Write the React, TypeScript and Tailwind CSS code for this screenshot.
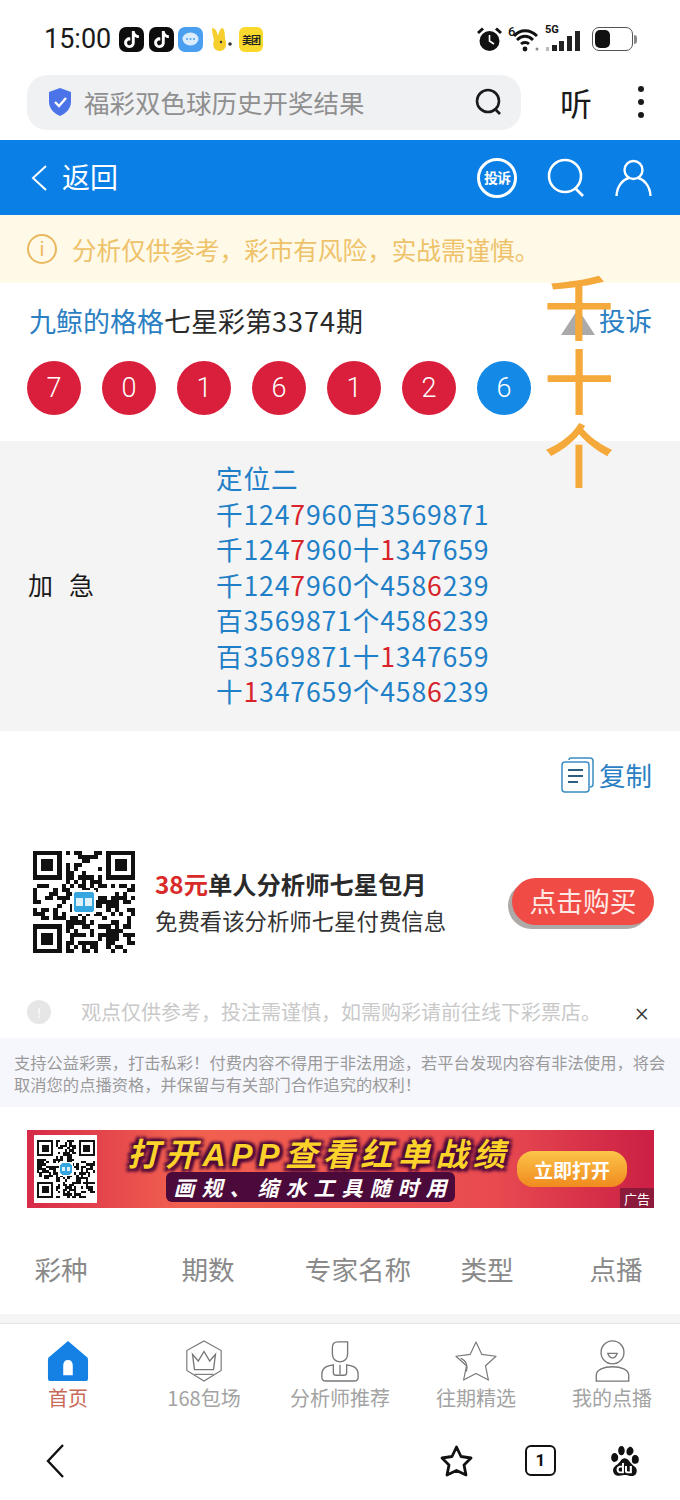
import React from "react";
import { SiTiktok, SiBaidu } from "react-icons/si";

const FONT = "font-['Noto_Sans_CJK_SC','Noto_Sans',sans-serif]";

function QR({ size, seed, logo = true }: { size: number; seed: number; logo?: boolean }) {
  const n = 25;
  let s = seed;
  const cells: React.ReactNode[] = [];
  const next = () => {
    s = (s * 1103515245 + 12345) & 0x7fffffff;
    return (s >> 16) & 1;
  };
  const inFinder = (x: number, y: number) =>
    (x < 8 && y < 8) || (x > 16 && y < 8) || (x < 8 && y > 16);
  for (let y = 0; y < n; y++) {
    for (let x = 0; x < n; x++) {
      if (inFinder(x, y)) continue;
      if (next()) cells.push(<rect key={`${x}-${y}`} x={x} y={y} width="1.02" height="1.02" fill="#111" />);
    }
  }
  const finder = (x: number, y: number) => (
    <g key={`f${x}${y}`}>
      <rect x={x} y={y} width="7" height="7" fill="#111" />
      <rect x={x + 1} y={y + 1} width="5" height="5" fill="#fff" />
      <rect x={x + 2} y={y + 2} width="3" height="3" fill="#111" />
    </g>
  );
  return (
    <svg width={size} height={size} viewBox="0 0 25 25" shapeRendering="crispEdges">
      {cells}
      {finder(0, 0)}
      {finder(18, 0)}
      {finder(0, 18)}
      {logo && (
        <g>
          <rect x="9.5" y="9.5" width="6" height="6" fill="#fff" />
          <rect x="10" y="10" width="5" height="5" rx="1" fill="#35a6e0" />
          <rect x="10.6" y="11.6" width="1.6" height="1.8" fill="#dff2fb" />
          <rect x="12.8" y="11.6" width="1.6" height="1.8" fill="#dff2fb" />
        </g>
      )}
    </svg>
  );
}

function Ball({ n, blue }: { n: number; blue?: boolean }) {
  return (
    <div className={`flex h-[54px] w-[54px] items-center justify-center rounded-full text-[27px] text-white font-['Roboto',sans-serif] font-light ${blue ? "bg-[#148ae6]" : "bg-[#d91f3b]"}`}>
      {n}
    </div>
  );
}

function StatusLeft() {
  return (
    <div className="flex items-center">
      <span className="w-[75px] pl-0 text-[27px] leading-none text-[#1a1a1a] font-['Roboto',sans-serif]">15:00</span>
      <div className="flex h-[25px] w-[25px] items-center justify-center rounded-[7px] bg-[#0d0d0d] text-white"><SiTiktok size={17} /></div>
      <div className="ml-[5px] flex h-[25px] w-[25px] items-center justify-center rounded-[7px] bg-[#0d0d0d] text-white"><SiTiktok size={17} /></div>
      <div className="ml-[4px] flex h-[25px] w-[25px] items-center justify-center rounded-[7px] bg-[#4b9ff0]">
        <svg width="17" height="15" viewBox="0 0 17 15"><ellipse cx="8.5" cy="7" rx="8" ry="6.5" fill="#dcecff" /><circle cx="5" cy="7" r="1" fill="#4b9ff0" /><circle cx="8.5" cy="7" r="1" fill="#4b9ff0" /><circle cx="12" cy="7" r="1" fill="#4b9ff0" /></svg>
      </div>
      <svg className="ml-[7px]" width="22" height="25" viewBox="0 0 22 25">
        <path d="M2 1 C6 1 7 5 8 9 C9 5 10 1 13 1 C15 4 15 9 15 12 C17 15 17 24 10 24 C4 24 2 19 4 13 C3 9 2 5 2 1Z" fill="#f6cf2f" />
        <circle cx="11" cy="15" r="1.2" fill="#333" /><circle cx="20" cy="17" r="1.8" fill="#333" />
      </svg>
      <div className="ml-[7px] flex h-[25px] w-[24px] items-center justify-center rounded-[6px] bg-[#fbd92c] text-[10px] font-bold tracking-[-1px] text-[#222]">美团</div>
    </div>
  );
}

function StatusRight() {
  return (
    <div className="flex items-center">
      <svg width="25" height="25" viewBox="0 0 25 25">
        <circle cx="12.5" cy="14" r="10" fill="#111" />
        <path d="M12.5 8 V14 L17 17" stroke="#fff" strokeWidth="1.6" fill="none" />
        <path d="M1 6 L6 1.5 M24 6 L19 1.5" stroke="#111" strokeWidth="3" />
      </svg>
      <svg className="ml-[6px]" width="32" height="28" viewBox="0 0 32 28">
        <text x="0" y="11" fontSize="13" fontWeight="500" fill="#111" fontFamily="Roboto">6</text>
        <path d="M6 11 C12 4 22 4 29 11 M9 15 C14 10 20 10 25 15 M13 19 C15 17 19 17 21 19" stroke="#111" strokeWidth="2.8" fill="none" />
        <circle cx="17" cy="24" r="2.4" fill="#111" />
        <circle cx="29" cy="24" r="1.5" fill="#888" />
      </svg>
      <div className="relative ml-[5px] h-[28px] w-[38px]">
        <span className="absolute left-0 top-[-1px] text-[11px] font-bold leading-none text-[#111] font-['Roboto',sans-serif]">5G</span>
        <svg className="absolute left-0 top-0" width="38" height="28" viewBox="0 0 38 28">
          <rect x="1" y="22" width="3" height="4" fill="#bbb" />
          <rect x="7" y="20" width="5" height="6" fill="#222" />
          <rect x="14" y="16" width="5" height="10" fill="#222" />
          <rect x="22" y="11" width="5" height="15" fill="#222" />
          <rect x="30" y="6" width="5" height="20" fill="#222" />
        </svg>
      </div>
      <div className="ml-[9px] flex items-center">
        <div className="flex h-[24px] w-[41px] items-center rounded-[7px] border border-[#555] p-[2px]">
          <div className="h-full w-[15px] rounded-[5px] bg-[#111]" />
        </div>
        <div className="ml-[1px] h-[9px] w-[3px] rounded-r-sm bg-[#888]" />
      </div>
    </div>
  );
}

function UrlBar() {
  return (
    <div className="flex h-[70px] items-center pb-[6px]">
      <div className="ml-[27px] flex h-[55px] w-[494px] items-center rounded-[20px] bg-[#f0f1f3] pl-[21px] pr-[18px]">
        <svg width="24" height="30" viewBox="0 0 24 30">
          <path d="M12 1 L23 5 V15 C23 22 17 27 12 29 C7 27 1 22 1 15 V5Z" fill="#4a74e8" />
          <path d="M7 15 L11 19 L18 11" stroke="#fff" strokeWidth="2.4" fill="none" />
        </svg>
        <span className="ml-[12px] flex-1 text-[25.5px] leading-none text-[#8f8f8f]">福彩双色球历史开奖结果</span>
        <svg width="28" height="28" viewBox="0 0 28 28" fill="none" stroke="#1a1a1a" strokeWidth="2.6">
          <circle cx="13" cy="13" r="11" />
          <path d="M20 21 L25 26" />
        </svg>
      </div>
      <span className="ml-[39px] text-[32px] leading-none text-[#1a1a1a]">听</span>
      <div className="ml-[46px] flex flex-col gap-[7px]">
        <div className="h-[6px] w-[6px] rounded-full bg-[#1a1a1a]" />
        <div className="h-[6px] w-[6px] rounded-full bg-[#1a1a1a]" />
        <div className="h-[6px] w-[6px] rounded-full bg-[#1a1a1a]" />
      </div>
    </div>
  );
}

function Header() {
  return (
    <div className="flex h-[75px] items-center bg-[#0a7fe6] text-white">
      <svg className="ml-[31px]" width="16" height="26" viewBox="0 0 16 26" fill="none" stroke="#fff" strokeWidth="2">
        <path d="M15 1 L2 13 L15 25" />
      </svg>
      <span className="ml-[15px] flex-1 pb-[3px] text-[28px] leading-none">返回</span>
      <div className="flex h-[40px] w-[40px] items-center justify-center rounded-full border-[3px] border-white text-[14px] font-bold tracking-[-1px]">投诉</div>
      <svg className="ml-[30px]" width="38" height="40" viewBox="0 0 38 40" fill="none" stroke="#fff" strokeWidth="2.6">
        <circle cx="18" cy="18" r="16" />
        <path d="M28 30 L36 38" />
      </svg>
      <svg className="ml-[30px] mr-[28px]" width="37" height="38" viewBox="0 0 37 38" fill="none" stroke="#fff" strokeWidth="2.4">
        <circle cx="18.5" cy="11" r="9" />
        <path d="M1.5 37 C2 26 9 20 14 19 M35.5 37 C35 26 28 20 23 19" />
      </svg>
    </div>
  );
}

function Notice() {
  return (
    <div className="flex h-[68px] items-center bg-[#fff9e7] pl-[27px]">
      <div className="flex h-[30px] w-[30px] items-center justify-center rounded-full border-2 border-[#ebb860] text-[20px] leading-none text-[#ebb860] font-['Roboto',sans-serif]">i</div>
      <span className="ml-[15px] text-[24.6px] leading-none text-[#eec26a]">分析仅供参考，彩市有风险，实战需谨慎。</span>
    </div>
  );
}

function TitleBlock() {
  const nums = [7, 0, 1, 6, 1, 2];
  return (
    <div className="h-[158px]">
      <div className="flex h-[78px] items-center justify-between pb-[4px] pl-[29px] pr-[28px]">
        <div className="text-[27px] leading-none text-[#2a2a2a]">
          <span className="text-[#2b80c3]">九鲸的格格</span>七星彩第<span className="tracking-[1px]">3374</span>期
        </div>
        <span className="text-[26.5px] leading-none text-[#2b80c3]">投诉</span>
      </div>
      <div className="flex gap-[21px] pl-[27px]">
        {nums.map((n, i) => <Ball key={i} n={n} />)}
        <Ball n={6} blue />
      </div>
    </div>
  );
}

function R({ children }: { children: React.ReactNode }) {
  return <span className="text-[#d8232a]">{children}</span>;
}

function Panel() {
  return (
    <div className="flex h-[290px] items-center bg-[#f4f4f4] pb-[3px]">
      <div className="ml-[28px] flex w-[188px] gap-[16px] text-[25px] leading-none text-[#1a1a1a]">
        <span>加</span>
        <span>急</span>
      </div>
      <div className="text-[26.6px] leading-[35.5px] tracking-[0.85px] text-[#1f7fc7]">
        <div>定位二</div>
        <div>千124<R>7</R>960百3569871</div>
        <div>千124<R>7</R>960十<R>1</R>347659</div>
        <div>千124<R>7</R>960个458<R>6</R>239</div>
        <div>百3569871个458<R>6</R>239</div>
        <div>百3569871十<R>1</R>347659</div>
        <div>十<R>1</R>347659个458<R>6</R>239</div>
      </div>
    </div>
  );
}

function CopyRow() {
  return (
    <div className="flex h-[90px] items-center justify-end pb-[2px] pr-[28px]">
      <svg width="34" height="36" viewBox="0 0 34 36" fill="none" stroke="#3a8cc4" strokeWidth="1.5">
        <path d="M8 3 Q8 1 10 1 H29 Q32 1 32 4 V27 Q32 30 29 30" />
        <rect x="1" y="5" width="27" height="30" rx="3" />
        <path d="M7 13 H22 M7 19 H22 M7 25 H17" strokeWidth="2" stroke="#2f5f80" />
      </svg>
      <span className="ml-[4px] text-[26.5px] leading-none text-[#2b80c3]">复制</span>
    </div>
  );
}

function BuyRow() {
  return (
    <div className="mt-[30px] flex h-[101px] items-center pl-[33px] pr-[26px]">
      <QR size={102} seed={4242} />
      <div className="ml-[20px] flex-1">
        <div className="text-[24.3px] font-bold leading-[37px] text-[#2a2a2a]"><span className="text-[#d92a2a]">38元</span>单人分析师七星包月</div>
        <div className="text-[22.4px] leading-[37px] text-[#333]">免费看该分析师七星付费信息</div>
      </div>
      <div className="flex h-[47px] w-[142px] items-center justify-center rounded-[24px] bg-[#f04b45] text-[26.8px] leading-none text-[#ffe9e4] shadow-[-4px_4px_0_#aeaaa8]">点击购买</div>
    </div>
  );
}

function Disclaimer() {
  return (
    <>
      <div className="mt-[42px] flex h-[36px] items-center pl-[27px]">
        <div className="flex h-[24px] w-[24px] items-center justify-center rounded-full bg-[#e6e6e6] text-[13px] leading-none text-white">!</div>
        <span className="ml-[30px] w-[554px] text-[20px] leading-none text-[#c9c9c9]">观点仅供参考，投注需谨慎，如需购彩请前往线下彩票店。</span>
        <span className="text-[26px] font-light leading-none text-[#333] font-['Roboto',sans-serif]">×</span>
      </div>
      <div className="mt-[8px] h-[69px] bg-[#f6f7fd] px-[14px] pt-[13px] text-[16.3px] leading-[22px] text-[#9a9a9a]">
        支持公益彩票，打击私彩！付费内容不得用于非法用途，若平台发现内容有非法使用，将会取消您的点播资格，并保留与有关部门合作追究的权利！
      </div>
    </>
  );
}

function Banner() {
  return (
    <div className="relative ml-[27px] mt-[23px] flex h-[78px] w-[627px] items-center overflow-hidden bg-[linear-gradient(90deg,#d62b49_0%,#f2614f_25%,#ee5650_50%,#e84a50_75%,#cb1f44_100%)]">
      <div className="ml-[7px] flex h-[68px] w-[63px] items-center justify-center bg-white">
        <QR size={58} seed={977} />
      </div>
      <div className="flex w-[420px] flex-col items-center pl-[6px]">
        <div className="ml-[18px] text-[32px] font-bold italic leading-[36px] tracking-[5.6px] text-[#fcd32a] [text-shadow:0_0_5px_#4c0a3a,3px_3px_3px_#4c0a3a,-3px_-2px_3px_#4c0a3a,3px_-2px_3px_#4c0a3a,-3px_3px_3px_#4c0a3a] font-['Liberation_Sans','Noto_Sans_CJK_SC',sans-serif] whitespace-nowrap">打开APP查看红单战绩</div>
        <div className="mt-[-1px] h-[30px] rounded-[6px] bg-[#4c0a3a] pl-[8px] pr-[1px] text-[21px] font-bold italic leading-[30px] tracking-[7px] text-white whitespace-nowrap">画规、缩水工具随时用</div>
      </div>
      <div className="flex h-[36px] w-[110px] items-center justify-center rounded-[16px] bg-[linear-gradient(180deg,#fcc44a,#f08a1e)] text-[19px] font-bold leading-none text-white">立即打开</div>
      <div className="absolute bottom-0 right-0 flex h-[20px] w-[34px] items-center justify-center bg-[#8c1a3a] text-[13px] leading-none text-white">广告</div>
    </div>
  );
}

function TableHead() {
  return (
    <div className="mt-[38px] mb-[20px] grid h-[48px] grid-cols-[122px_172px_128px_130px_128px] items-center pb-[2px] text-center text-[26.6px] leading-none text-[#8a8a8a]">
      <span>彩种</span>
      <span>期数</span>
      <span>专家名称</span>
      <span>类型</span>
      <span>点播</span>
    </div>
  );
}

const NAV_ICONS = [
  <svg key="h" width="44" height="42" viewBox="0 0 44 44">
    <path d="M22 1 L42 18 Q43 19 43 21 V40 Q43 43 40 43 H4 Q1 43 1 40 V21 Q1 19 2 18Z" fill="#1581e5" />
    <path d="M17 37 V27 Q17 21 22 21 Q27 21 27 27 V37Z" fill="#fff" />
  </svg>,
  <svg key="c" width="40" height="42" viewBox="0 0 40 44" fill="none" stroke="#777" strokeWidth="1.2">
    <path d="M20 1 L38 11 V32 L20 43 L2 32 V11Z" />
    <path d="M8 15 L14 22 L20 12 L26 22 L32 15 L30 31 H10Z" strokeWidth="1.4" />
    <path d="M10 36 H30" />
  </svg>,
  <svg key="a" width="40" height="42" viewBox="0 0 42 44" fill="none" stroke="#777" strokeWidth="1.4">
    <path d="M13 8 Q13 2 19 2 H29 V14 Q29 22 21 23 Q13 22 13 14Z" />
    <path d="M14 26 C8 27 2 28 2 36 V39 Q2 43 6 43 H36 Q40 43 40 39 V36 C40 28 34 27 28 26 V34 Q28 37 25 37 H17 Q14 37 14 34Z" />
    <path d="M21 26 V36" />
  </svg>,
  <svg key="s" width="44" height="42" viewBox="0 0 44 44" fill="none" stroke="#777" strokeWidth="1.2">
    <path d="M22 2 L28 15 L43 17 L32 27 L35 42 L22 35 L9 42 L12 27 L1 17 L16 15Z" strokeLinejoin="round" />
    <path d="M6 19 C12 22 14 26 12 33" />
  </svg>,
  <svg key="u" width="37" height="42" viewBox="0 0 38 44" fill="none" stroke="#777" strokeWidth="1.4">
    <ellipse cx="19" cy="13" rx="12" ry="12" />
    <path d="M14 14 H24 Q22 19 19 19 Q16 19 14 14Z" />
    <path d="M2 43 V37 C2 31 10 28 19 28 C28 28 36 31 36 37 V43Z" />
  </svg>,
];

function BottomNav() {
  const labels = ["首页", "168包场", "分析师推荐", "往期精选", "我的点播"];
  return (
    <div className="grid h-[102px] grid-cols-5 border-t border-[#e6e6e6] pt-[16px]">
      {labels.map((l, i) => (
        <div key={l} className="flex flex-col items-center">
          <div className="flex h-[42px] items-center justify-center">{NAV_ICONS[i]}</div>
          <span className={`mt-[2px] text-[20px] leading-[28px] ${i === 0 ? "text-[#c96a58]" : "text-[#a3a3a3]"}`}>{l}</span>
        </div>
      ))}
    </div>
  );
}

function BrowserBar() {
  return (
    <div className="flex h-[75px] items-center pb-[4px]">
      <svg className="ml-[45px]" width="20" height="36" viewBox="0 0 20 36" fill="none" stroke="#111" strokeWidth="2.4">
        <path d="M18 2 L3 18 L18 34" />
      </svg>
      <div className="flex-1" />
      <svg width="35" height="34" viewBox="0 0 35 34" fill="none" stroke="#111" strokeWidth="2.8">
        <path d="M17.5 3 L22 12.5 L32 14 L25 21 L27 31 L17.5 26.5 L8 31 L10 21 L3 14 L13 12.5Z" strokeLinejoin="round" />
      </svg>
      <div className="ml-[51px] flex h-[31px] w-[31px] items-center justify-center rounded-[6px] border-[2.5px] border-[#111] text-[17px] font-bold leading-none text-[#111] font-['Roboto',sans-serif]">1</div>
      <div className="ml-[54px] mr-[40px] text-[#111]"><SiBaidu size={30} /></div>
    </div>
  );
}

function Handwriting() {
  return (
    <>
      <div className="absolute left-[561px] top-[309px] h-0 w-0 border-x-[17px] border-b-[26px] border-x-transparent border-b-[#aaaaaa]" />
      <div className="absolute left-[544px] top-[268px] flex w-[70px] flex-col items-center text-[70px] font-medium leading-[74px] text-[#f5a93a]">
        <span>千</span>
        <span>十</span>
        <span>个</span>
      </div>
    </>
  );
}

export default function App() {
  return (
    <div className={`relative flex h-[1500px] w-[680px] flex-col overflow-hidden bg-white ${FONT}`}>
      <div className="flex h-[70px] items-center justify-between pl-[44px] pr-[43px] pt-[8px]">
        <StatusLeft />
        <StatusRight />
      </div>
      <UrlBar />
      <Header />
      <Notice />
      <TitleBlock />
      <Panel />
      <CopyRow />
      <BuyRow />
      <Disclaimer />
      <Banner />
      <TableHead />
      <div className="h-[9px] bg-[#f5f5f5]" />
      <BottomNav />
      <BrowserBar />
      <Handwriting />
    </div>
  );
}
